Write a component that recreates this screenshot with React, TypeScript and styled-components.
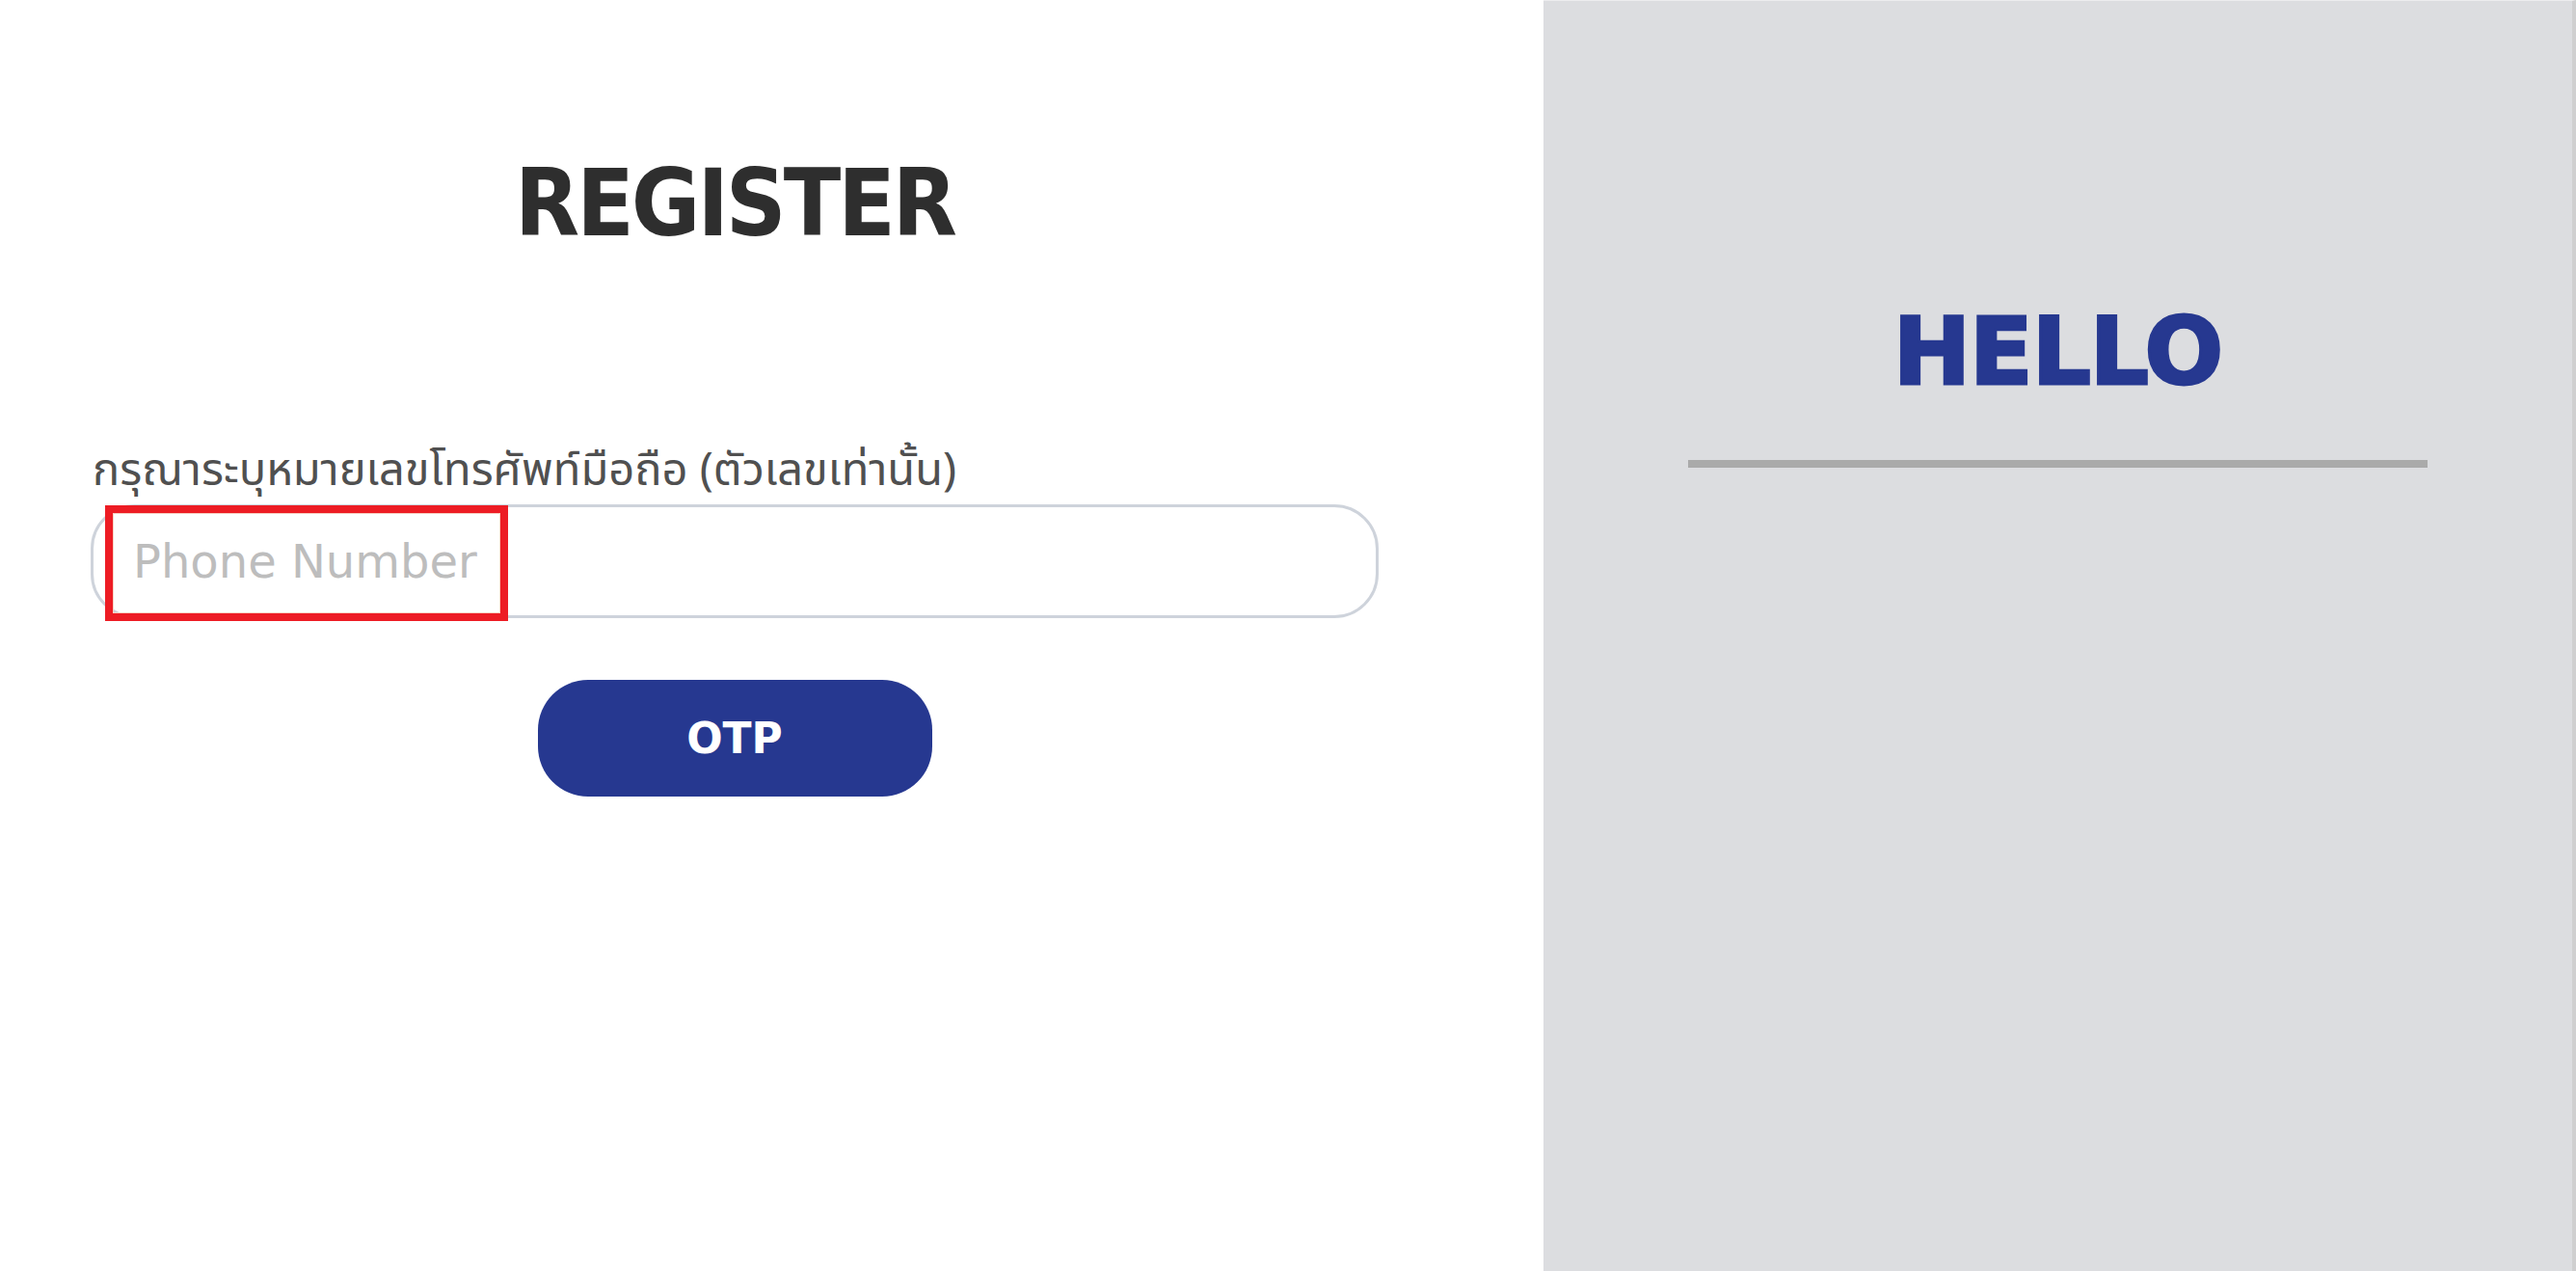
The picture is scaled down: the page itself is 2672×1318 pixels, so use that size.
import React from "react";
import styled, { createGlobalStyle } from "styled-components";

const GlobalStyle = createGlobalStyle`
  html, body {
    margin: 0;
    padding: 0;
    background: #ffffff;
  }
  body {
    font-family: "DejaVu Sans", "Noto Sans", sans-serif;
  }
  * {
    box-sizing: border-box;
  }
`;

const Page = styled.div`
  display: grid;
  grid-template-columns: 1601px 1fr;
  width: 100%;
  height: 1318px;
  overflow: hidden;
`;

const FormSide = styled.section`
  background: #ffffff;
  padding: 162px 0 0 94px;
`;

const FormColumn = styled.div`
  width: 1336px;
  display: flex;
  flex-direction: column;
`;

const Title = styled.h1`
  margin: 0;
  align-self: center;
  font-family: "DejaVu Sans Condensed", "DejaVu Sans", sans-serif;
  font-stretch: condensed;
  font-weight: 700;
  font-size: 97px;
  line-height: 1;
  color: #2e2e2e;
  letter-spacing: -3px;
`;

const Label = styled.label`
  margin: 202px 0 6px 2px;
  height: 56px;
  font-family: "Noto Sans Thai", "Noto Sans Thai UI", "Noto Sans", sans-serif;
  font-size: 47px;
  line-height: 56px;
  color: #505050;
  white-space: nowrap;
`;

const InputWrap = styled.div`
  position: relative;
  width: 1336px;
  height: 118px;
`;

const PhoneInput = styled.input`
  width: 100%;
  height: 100%;
  border: 3px solid #ced3db;
  border-radius: 46px;
  padding: 0 0 0 41px;
  font-family: "DejaVu Sans", sans-serif;
  font-size: 48px;
  color: #333;
  outline: none;
  background: #ffffff;

  &::placeholder {
    color: #bdbdbd;
  }
`;

const Highlight = styled.div`
  position: absolute;
  left: 15px;
  top: 1px;
  width: 418px;
  height: 120px;
  border: 8px solid #ed1c24;
  box-shadow: inset 0 0 0 1px #f6d2c4;
  pointer-events: none;
`;

const OtpButton = styled.button`
  align-self: center;
  margin-top: 64px;
  width: 409px;
  height: 121px;
  border: none;
  border-radius: 52px;
  background: #263890;
  color: #ffffff;
  font-family: "DejaVu Sans", sans-serif;
  font-weight: 700;
  font-size: 44px;
  cursor: pointer;
`;

const GreetSide = styled.aside`
  background: #dcdde0;
  border-top: 1px solid #ececee;
  border-right: 4px solid #cfcfd0;
  display: flex;
  flex-direction: column;
  align-items: center;
  padding-top: 316px;
`;

const Greeting = styled.h2`
  margin: 0;
  font-family: "DejaVu Sans", sans-serif;
  font-weight: 700;
  font-size: 96px;
  line-height: 1;
  color: #263890;
  -webkit-text-stroke: 3px #263890;
  letter-spacing: -1px;
`;

const Divider = styled.hr`
  margin: 64px 0 0;
  width: 767px;
  height: 8px;
  border: none;
  background: #aaaaaa;
`;

export default function App() {
  return (
    <>
      <GlobalStyle />
      <Page>
        <FormSide>
          <FormColumn>
            <Title>REGISTER</Title>
            <Label htmlFor="phone">กรุณาระบุหมายเลขโทรศัพท์มือถือ (ตัวเลขเท่านั้น)</Label>
            <InputWrap>
              <PhoneInput id="phone" type="tel" placeholder="Phone Number" />
              <Highlight />
            </InputWrap>
            <OtpButton type="button">OTP</OtpButton>
          </FormColumn>
        </FormSide>
        <GreetSide>
          <Greeting>HELLO</Greeting>
          <Divider />
        </GreetSide>
      </Page>
    </>
  );
}
